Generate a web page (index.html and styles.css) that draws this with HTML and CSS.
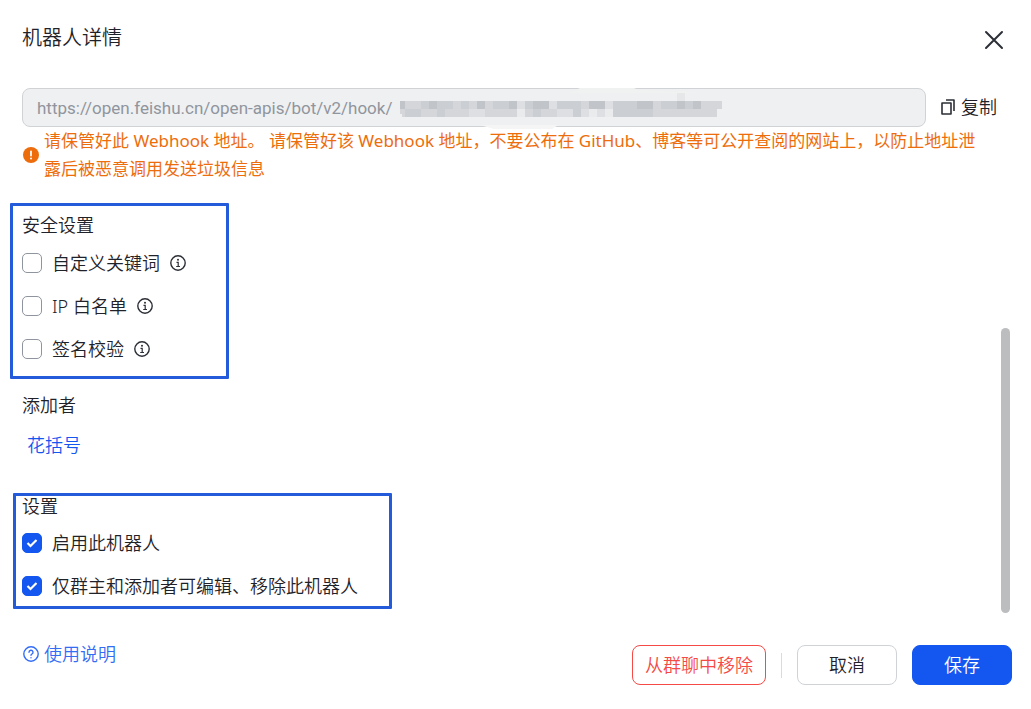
FILE: index.html
```html
<!DOCTYPE html>
<html lang="zh-CN">

<head>
    <meta charset="UTF-8">
    <meta name="viewport" content="width=device-width, initial-scale=1.0">
    <title>机器人详情</title>
    <link rel="stylesheet" href="styles.css">
</head>

<body>
    <div class="dialog">
        <div class="header">
            <h1 class="title">机器人详情</h1>
            <button class="close" type="button" aria-label="关闭">
                <svg width="20" height="20" viewBox="0 0 20 20" fill="none" stroke="#2b2f36" stroke-width="2" stroke-linecap="round">
                    <path d="M2 2l16 16M18 2L2 18" />
                </svg>
            </button>
        </div>

        <div class="content">
            <div class="webhook">
                <div class="url-box">
                    <input class="url" type="text" aria-label="Webhook 地址" value="https://open.feishu.cn/open-apis/bot/v2/hook/" readonly>
                    <!-- 打码 -->
                    <svg class="mask" width="326" height="42" viewBox="0 0 326 42">
                        <path d="M183 0h54q4 3 60 4v1H171z" fill="#f0f1f1" />
                        <path d="M83 37h78l-6 4h-58z" fill="#f5f5f5" />
                        <g shape-rendering="crispEdges">
                            <path d="M3 13H325v8h-5v8H5v-3H3z" fill="#d4d6d9" />
                            <path d="M280 5h8v8h-8z" fill="#e6e7e9" />
                            <path d="M24 13h8v8h-8zM40 13h16v8h-16zM64 13h8v8h-8zM96 13h16v8h-16zM128 13h8v8h-8zM160 13h24v8h-24zM216 13h24v8h-24zM264 13h16v8h-16zM288 13h8v8h-8zM8 21h16v8H8zM40 21h8v8h-8zM136 21h8v8h-8zM176 21h8v8h-8zM216 21h40v8h-40z" fill="#cbced2" />
                            <path d="M3 13h5v8h-5zM32 13h8v8h-8zM80 13h8v8h-8zM112 13h8v8h-8zM136 13h16v8h-16zM192 13h16v8h-16zM240 13h16v8h-16zM280 13h8v8h-8zM296 13h8v8h-8z" fill="#c1c4c9" />
                            <path d="M120 13h8v8h-8zM152 13h8v8h-8zM208 13h8v8h-8zM72 21h16v8h-16zM160 21h16v8h-16zM184 21h8v8h-8zM200 21h8v8h-8z" fill="#dedfe2" />
                            <path d="M120 21h8v8h-8zM192 21h8v8h-8zM208 21h8v8h-8z" fill="#eaebed" />
                        </g>
                    </svg>
                </div>
                <button class="copy" type="button">
                    <svg width="14" height="16" viewBox="0 0 14 16" fill="none" stroke="#2b2f36" stroke-width="1.600" stroke-linejoin="round">
                        <path d="M1 4h9v11H1zM5 1h8v11" />
                    </svg>
                    复制
                </button>
            </div>
            <div class="warning">
                <svg width="16" height="16" viewBox="0 0 16 16">
                    <circle cx="8" cy="8" r="8" fill="#ed6d0c" />
                    <path d="M8 4.500v4" stroke="#fff" stroke-width="1.800" stroke-linecap="round" />
                    <circle cx="8" cy="11.500" r="1" fill="#fff" />
                </svg>
                <p>请保管好此 Webhook 地址。 请保管好该 Webhook 地址，不要公布在 GitHub、博客等可公开查阅的网站上，以防止地址泄露后被恶意调用发送垃圾信息</p>
            </div>

            <div class="group safe">
                <h2>安全设置</h2>
                <div class="item">
                    <label><input type="checkbox">自定义关键词</label>
                    <svg width="16" height="16"><use href="#i-info" /></svg>
                </div>
                <div class="item">
                    <label><input type="checkbox">IP 白名单</label>
                    <svg width="16" height="16"><use href="#i-info" /></svg>
                </div>
                <div class="item">
                    <label><input type="checkbox">签名校验</label>
                    <svg width="16" height="16"><use href="#i-info" /></svg>
                </div>
            </div>

            <div class="adder">
                <h2>添加者</h2>
                <a href="#">花括号</a>
            </div>

            <div class="group setting">
                <h2>设置</h2>
                <div class="item">
                    <label><input type="checkbox" checked>启用此机器人</label>
                </div>
                <div class="item">
                    <label><input type="checkbox" checked>仅群主和添加者可编辑、移除此机器人</label>
                </div>
            </div>
            <div class="scrollbar"></div>
        </div>

        <div class="footer">
            <a class="help" href="#">
                <svg width="16" height="16" viewBox="0 0 16 16" fill="none" stroke="#336df4" stroke-width="1.400" stroke-linecap="round">
                    <circle cx="8" cy="8" r="7.200" />
                    <path d="M6 6.300a2 2 0 1 1 3 1.700c-.7.400-1 .7-1 1.300" />
                    <path d="M8 11.700v.1" />
                </svg>
                使用说明
            </a>
            <div class="btns">
                <button class="btn remove" type="button">从群聊中移除</button>
                <span class="line"></span>
                <button class="btn" type="button">取消</button>
                <button class="btn save" type="button">保存</button>
            </div>
        </div>
    </div>

    <svg class="defs">
        <symbol id="i-info" viewBox="0 0 16 16">
            <circle cx="8" cy="8" r="7.200" fill="none" stroke="#2b2f36" stroke-width="1.400" />
            <circle cx="8" cy="4.800" r="1" fill="#2b2f36" />
            <path d="M6.500 7.300H8.200V11.300M6.200 11.500h3.800" fill="none" stroke="#2b2f36" stroke-width="1.200" />
        </symbol>
    </svg>
</body>

</html>
```
FILE: styles.css
```css
* {
    margin: 0;
    padding: 0;
    box-sizing: border-box;
}

body {
    background-color: #fff;
    color: #1f2329;
    font-family: "Noto Sans", "Noto Sans CJK SC", sans-serif;
    font-size: 18px;
    line-height: 28px;
    font-weight: 350;
}

button,
input {
    font: inherit;
    color: inherit;
}

button {
    cursor: pointer;
}

a {
    color: #1456f0;
    text-decoration: none;
}

h2 {
    font-size: 18px;
    font-weight: 350;
}

.dialog {
    display: flex;
    flex-direction: column;
    min-height: 100vh;
    padding: 20px 19px 24px 22px;
}

.header {
    display: flex;
    justify-content: space-between;
    height: 68px;
}

.title {
    font-size: 20px;
    line-height: 36px;
    font-weight: 350;
}

.close {
    width: 32px;
    height: 40px;
    margin-right: 2px;
    border: 0;
    background: none;
}

.close svg {
    display: block;
    margin: 0 auto;
}

.content {
    position: relative;
}

.webhook {
    display: flex;
    align-items: center;
    gap: 15px;
    padding-right: 15px;
}

.url-box {
    position: relative;
    flex: 1;
}

.url {
    display: block;
    width: 100%;
    height: 39px;
    padding: 0 14px;
    border: 1px solid #d0d3d6;
    border-radius: 8px;
    background-color: #eff0f1;
    color: #8f959e;
    font-family: Roboto, "Noto Sans CJK SC", sans-serif;
    font-size: 17px;
    font-weight: 400;
    outline: none;
}

.mask {
    position: absolute;
    left: 375px;
    top: 0;
}

.copy {
    display: flex;
    align-items: center;
    gap: 6px;
    padding-bottom: 2px;
    border: 0;
    background: none;
}

.warning {
    display: flex;
    align-items: center;
    gap: 5px;
    padding: 0 25px 0 1px;
    color: #ed6d0c;
    font-size: 17px;
    font-weight: 400;
}

.warning svg {
    flex: none;
}

.group {
    width: fit-content;
    border: 3px solid #245bdb;
    border-radius: 1px;
}

.safe {
    margin: 20px 0 0 -12px;
    padding: 5px 40px 13px 9px;
}

.item {
    display: flex;
    align-items: center;
    gap: 10px;
    height: 28px;
}

.item + .item {
    margin-top: 15px;
}

h2 + .item {
    margin-top: 10px;
}

.item label {
    display: flex;
    align-items: center;
    gap: 10px;
}

.item input {
    appearance: none;
    width: 20px;
    height: 20px;
    border: 1px solid #8f959e;
    border-radius: 5px;
}

.item input:checked {
    border-color: #1456f0;
    background: #1456f0 url("data:image/svg+xml,%3Csvg xmlns='http://www.w3.org/2000/svg' viewBox='0 0 20 20'%3E%3Cpath d='M5.500 10l3 3 6-6' fill='none' stroke='%23fff' stroke-width='2.200'/%3E%3C/svg%3E") center / 20px no-repeat;
}

.adder {
    margin-top: 12px;
}

.adder a {
    display: block;
    width: fit-content;
    margin: 12px 0 0 5px;
}

.setting {
    margin: 34px 0 0 -9px;
    padding: 0 31px 6px 6px;
}

.setting h2 {
    line-height: 20px;
}

.setting h2 + .item {
    margin-top: 13px;
}

.scrollbar {
    position: absolute;
    top: 240px;
    right: 2px;
    width: 9px;
    height: 285px;
    border-radius: 5px;
    background-color: #bbbdbf;
}

.footer {
    display: flex;
    justify-content: space-between;
    margin-top: auto;
}

.help {
    display: flex;
    align-items: center;
    gap: 5px;
    height: 18px;
    padding-left: 1px;
    color: #336df4;
}

.btns {
    display: flex;
    align-items: center;
    gap: 15px;
}

.btn {
    min-width: 100px;
    height: 40px;
    padding: 0 12px;
    border: 1px solid #d0d3d6;
    border-radius: 8px;
    background-color: #fff;
}

.remove {
    border-color: #f54a45;
    color: #f54a45;
}

.line {
    width: 1px;
    height: 25px;
    background-color: #d9dbde;
}

.save {
    border-color: #1456f0;
    background-color: #1456f0;
    color: #fff;
}

.defs {
    position: absolute;
    width: 0;
    height: 0;
}
```
